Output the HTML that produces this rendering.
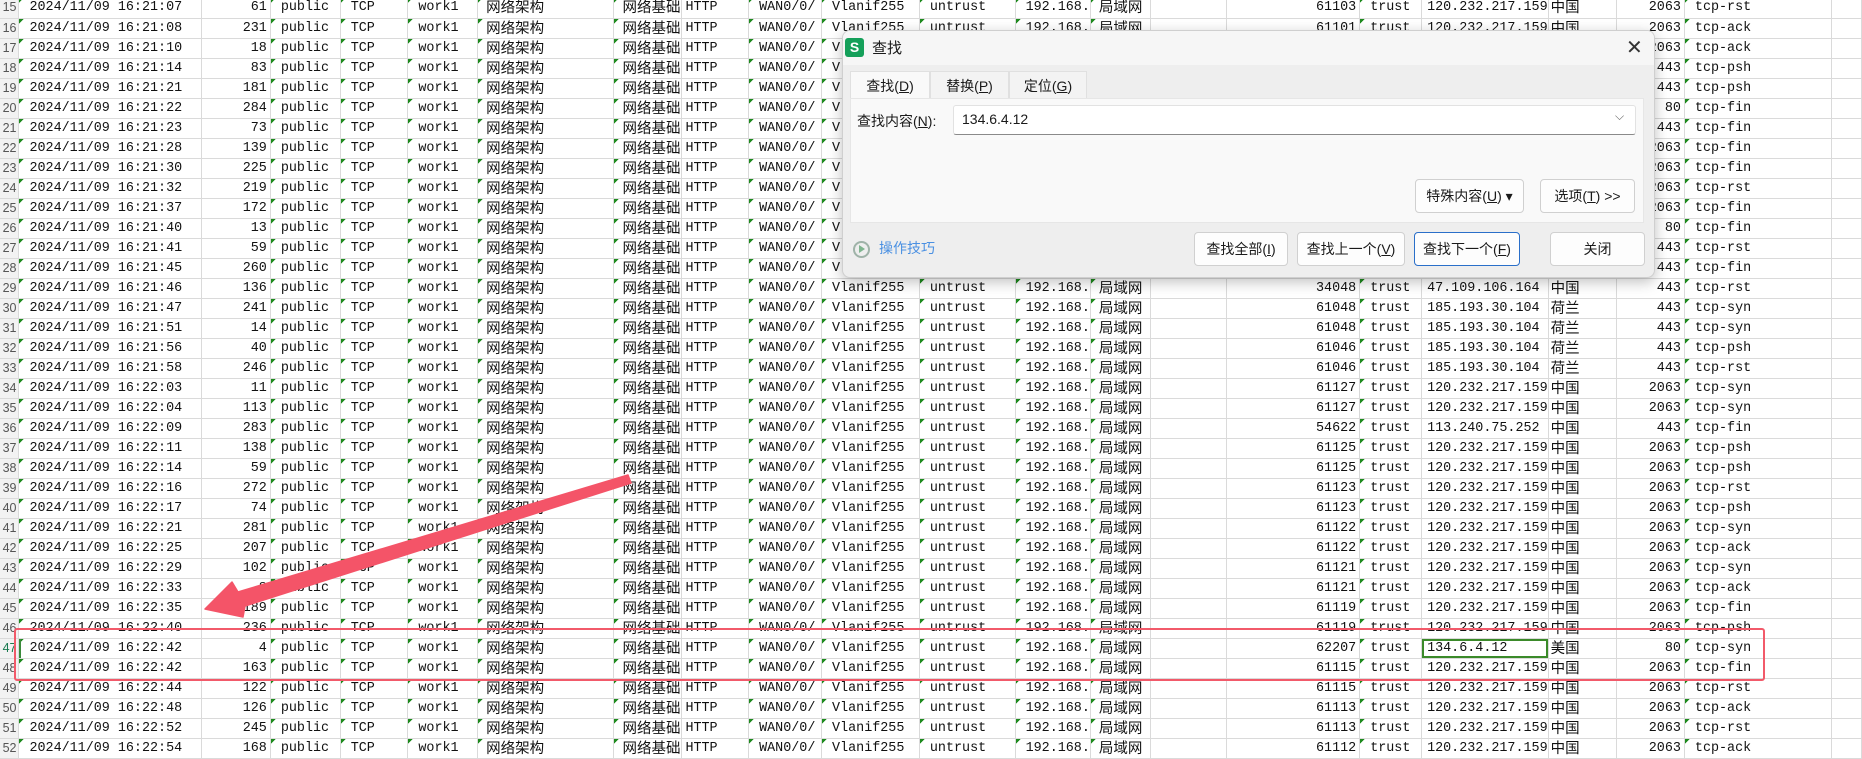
<!DOCTYPE html>
<html><head><meta charset="utf-8"><style>
body{margin:0;width:1862px;height:759px;overflow:hidden;background:#fff;position:relative;font-family:"Liberation Mono","Noto Sans CJK SC",monospace;}
table{border-collapse:collapse;table-layout:fixed;position:absolute;left:0;top:-2px;}
tr{height:20px;}
td{height:19px;border-right:1px solid #dadada;border-bottom:1px solid #dadada;padding:0 0 0 10px;font-size:13.4px;color:#111;white-space:nowrap;overflow:hidden;line-height:19px;}
td.r{text-align:right;padding:0 3px 0 0;}
td.n{background:#f2f2f2;color:#555;text-align:right;padding:0 2px 0 0;font-size:12.5px;font-family:"Liberation Sans",sans-serif;}
td.t{background-image:linear-gradient(135deg,#1e8a1e 3.5px,transparent 3.5px);background-repeat:no-repeat;}
td.c{font-family:"Noto Sans CJK SC",sans-serif;font-size:14.5px;line-height:15px;vertical-align:top;padding-top:1px;padding-left:8px;height:18px;}
td:nth-child(9){padding-left:3px;}
td:nth-child(18){padding-left:5px;}
td:nth-child(19){padding-left:2px;}
.dlg{position:absolute;left:842px;top:30px;width:811px;height:246px;background:#eeeeee;border:1px solid #cfcfcf;border-radius:8px;box-shadow:0 4px 14px rgba(0,0,0,.25);font-family:"Liberation Sans","Noto Sans CJK SC",sans-serif;font-size:14px;color:#1a1a1a;overflow:hidden;}
.dlg div{position:absolute;}
.btn{background:#fdfdfd;border:1px solid #d0d0d0;border-radius:4px;text-align:center;box-sizing:border-box;}
.tab{top:40px;height:28px;line-height:28px;text-align:center;border:1px solid #e0e0e0;border-bottom:none;background:#f3f3f3;box-sizing:border-box;}
</style></head><body>
<table>
<colgroup><col style="width:19px"><col style="width:183px"><col style="width:69px"><col style="width:70px"><col style="width:68px"><col style="width:70px"><col style="width:137px"><col style="width:68px"><col style="width:67px"><col style="width:73px"><col style="width:98px"><col style="width:96px"><col style="width:72px"><col style="width:60px"><col style="width:77px"><col style="width:134px"><col style="width:62px"><col style="width:124px"><col style="width:69px"><col style="width:68px"><col style="width:148px"><col style="width:30px"></colgroup>
<tr><td class="n">15</td><td class="t">2024/11/09 16:21:07</td><td class="r">61</td><td class="t">public</td><td class="t">TCP</td><td class="t">work1</td><td class="t c">网络架构</td><td class="t c">网络基础</td><td>HTTP</td><td class="t">WAN0/0/</td><td class="t">Vlanif255</td><td class="t">untrust</td><td class="t">192.168.</td><td class="t c">局域网</td><td></td><td class="r">61103</td><td class="t">trust</td><td>120.232.217.159</td><td class="c">中国</td><td class="r">2063</td><td class="t">tcp-rst</td><td></td></tr>
<tr><td class="n">16</td><td class="t">2024/11/09 16:21:08</td><td class="r">231</td><td class="t">public</td><td class="t">TCP</td><td class="t">work1</td><td class="t c">网络架构</td><td class="t c">网络基础</td><td>HTTP</td><td class="t">WAN0/0/</td><td class="t">Vlanif255</td><td class="t">untrust</td><td class="t">192.168.</td><td class="t c">局域网</td><td></td><td class="r">61101</td><td class="t">trust</td><td>120.232.217.159</td><td class="c">中国</td><td class="r">2063</td><td class="t">tcp-ack</td><td></td></tr>
<tr><td class="n">17</td><td class="t">2024/11/09 16:21:10</td><td class="r">18</td><td class="t">public</td><td class="t">TCP</td><td class="t">work1</td><td class="t c">网络架构</td><td class="t c">网络基础</td><td>HTTP</td><td class="t">WAN0/0/</td><td class="t">V</td><td></td><td></td><td></td><td></td><td></td><td></td><td></td><td></td><td class="r">2063</td><td class="t">tcp-ack</td><td></td></tr>
<tr><td class="n">18</td><td class="t">2024/11/09 16:21:14</td><td class="r">83</td><td class="t">public</td><td class="t">TCP</td><td class="t">work1</td><td class="t c">网络架构</td><td class="t c">网络基础</td><td>HTTP</td><td class="t">WAN0/0/</td><td class="t">V</td><td></td><td></td><td></td><td></td><td></td><td></td><td></td><td></td><td class="r">443</td><td class="t">tcp-psh</td><td></td></tr>
<tr><td class="n">19</td><td class="t">2024/11/09 16:21:21</td><td class="r">181</td><td class="t">public</td><td class="t">TCP</td><td class="t">work1</td><td class="t c">网络架构</td><td class="t c">网络基础</td><td>HTTP</td><td class="t">WAN0/0/</td><td class="t">V</td><td></td><td></td><td></td><td></td><td></td><td></td><td></td><td></td><td class="r">443</td><td class="t">tcp-psh</td><td></td></tr>
<tr><td class="n">20</td><td class="t">2024/11/09 16:21:22</td><td class="r">284</td><td class="t">public</td><td class="t">TCP</td><td class="t">work1</td><td class="t c">网络架构</td><td class="t c">网络基础</td><td>HTTP</td><td class="t">WAN0/0/</td><td class="t">V</td><td></td><td></td><td></td><td></td><td></td><td></td><td></td><td></td><td class="r">80</td><td class="t">tcp-fin</td><td></td></tr>
<tr><td class="n">21</td><td class="t">2024/11/09 16:21:23</td><td class="r">73</td><td class="t">public</td><td class="t">TCP</td><td class="t">work1</td><td class="t c">网络架构</td><td class="t c">网络基础</td><td>HTTP</td><td class="t">WAN0/0/</td><td class="t">V</td><td></td><td></td><td></td><td></td><td></td><td></td><td></td><td></td><td class="r">443</td><td class="t">tcp-fin</td><td></td></tr>
<tr><td class="n">22</td><td class="t">2024/11/09 16:21:28</td><td class="r">139</td><td class="t">public</td><td class="t">TCP</td><td class="t">work1</td><td class="t c">网络架构</td><td class="t c">网络基础</td><td>HTTP</td><td class="t">WAN0/0/</td><td class="t">V</td><td></td><td></td><td></td><td></td><td></td><td></td><td></td><td></td><td class="r">2063</td><td class="t">tcp-fin</td><td></td></tr>
<tr><td class="n">23</td><td class="t">2024/11/09 16:21:30</td><td class="r">225</td><td class="t">public</td><td class="t">TCP</td><td class="t">work1</td><td class="t c">网络架构</td><td class="t c">网络基础</td><td>HTTP</td><td class="t">WAN0/0/</td><td class="t">V</td><td></td><td></td><td></td><td></td><td></td><td></td><td></td><td></td><td class="r">2063</td><td class="t">tcp-fin</td><td></td></tr>
<tr><td class="n">24</td><td class="t">2024/11/09 16:21:32</td><td class="r">219</td><td class="t">public</td><td class="t">TCP</td><td class="t">work1</td><td class="t c">网络架构</td><td class="t c">网络基础</td><td>HTTP</td><td class="t">WAN0/0/</td><td class="t">V</td><td></td><td></td><td></td><td></td><td></td><td></td><td></td><td></td><td class="r">2063</td><td class="t">tcp-rst</td><td></td></tr>
<tr><td class="n">25</td><td class="t">2024/11/09 16:21:37</td><td class="r">172</td><td class="t">public</td><td class="t">TCP</td><td class="t">work1</td><td class="t c">网络架构</td><td class="t c">网络基础</td><td>HTTP</td><td class="t">WAN0/0/</td><td class="t">V</td><td></td><td></td><td></td><td></td><td></td><td></td><td></td><td></td><td class="r">2063</td><td class="t">tcp-fin</td><td></td></tr>
<tr><td class="n">26</td><td class="t">2024/11/09 16:21:40</td><td class="r">13</td><td class="t">public</td><td class="t">TCP</td><td class="t">work1</td><td class="t c">网络架构</td><td class="t c">网络基础</td><td>HTTP</td><td class="t">WAN0/0/</td><td class="t">V</td><td></td><td></td><td></td><td></td><td></td><td></td><td></td><td></td><td class="r">80</td><td class="t">tcp-fin</td><td></td></tr>
<tr><td class="n">27</td><td class="t">2024/11/09 16:21:41</td><td class="r">59</td><td class="t">public</td><td class="t">TCP</td><td class="t">work1</td><td class="t c">网络架构</td><td class="t c">网络基础</td><td>HTTP</td><td class="t">WAN0/0/</td><td class="t">V</td><td></td><td></td><td></td><td></td><td></td><td></td><td></td><td></td><td class="r">443</td><td class="t">tcp-rst</td><td></td></tr>
<tr><td class="n">28</td><td class="t">2024/11/09 16:21:45</td><td class="r">260</td><td class="t">public</td><td class="t">TCP</td><td class="t">work1</td><td class="t c">网络架构</td><td class="t c">网络基础</td><td>HTTP</td><td class="t">WAN0/0/</td><td class="t">V</td><td></td><td></td><td></td><td></td><td></td><td></td><td></td><td></td><td class="r">443</td><td class="t">tcp-fin</td><td></td></tr>
<tr><td class="n">29</td><td class="t">2024/11/09 16:21:46</td><td class="r">136</td><td class="t">public</td><td class="t">TCP</td><td class="t">work1</td><td class="t c">网络架构</td><td class="t c">网络基础</td><td>HTTP</td><td class="t">WAN0/0/</td><td class="t">Vlanif255</td><td class="t">untrust</td><td class="t">192.168.</td><td class="t c">局域网</td><td></td><td class="r">34048</td><td class="t">trust</td><td>47.109.106.164</td><td class="c">中国</td><td class="r">443</td><td class="t">tcp-rst</td><td></td></tr>
<tr><td class="n">30</td><td class="t">2024/11/09 16:21:47</td><td class="r">241</td><td class="t">public</td><td class="t">TCP</td><td class="t">work1</td><td class="t c">网络架构</td><td class="t c">网络基础</td><td>HTTP</td><td class="t">WAN0/0/</td><td class="t">Vlanif255</td><td class="t">untrust</td><td class="t">192.168.</td><td class="t c">局域网</td><td></td><td class="r">61048</td><td class="t">trust</td><td>185.193.30.104</td><td class="c">荷兰</td><td class="r">443</td><td class="t">tcp-syn</td><td></td></tr>
<tr><td class="n">31</td><td class="t">2024/11/09 16:21:51</td><td class="r">14</td><td class="t">public</td><td class="t">TCP</td><td class="t">work1</td><td class="t c">网络架构</td><td class="t c">网络基础</td><td>HTTP</td><td class="t">WAN0/0/</td><td class="t">Vlanif255</td><td class="t">untrust</td><td class="t">192.168.</td><td class="t c">局域网</td><td></td><td class="r">61048</td><td class="t">trust</td><td>185.193.30.104</td><td class="c">荷兰</td><td class="r">443</td><td class="t">tcp-syn</td><td></td></tr>
<tr><td class="n">32</td><td class="t">2024/11/09 16:21:56</td><td class="r">40</td><td class="t">public</td><td class="t">TCP</td><td class="t">work1</td><td class="t c">网络架构</td><td class="t c">网络基础</td><td>HTTP</td><td class="t">WAN0/0/</td><td class="t">Vlanif255</td><td class="t">untrust</td><td class="t">192.168.</td><td class="t c">局域网</td><td></td><td class="r">61046</td><td class="t">trust</td><td>185.193.30.104</td><td class="c">荷兰</td><td class="r">443</td><td class="t">tcp-psh</td><td></td></tr>
<tr><td class="n">33</td><td class="t">2024/11/09 16:21:58</td><td class="r">246</td><td class="t">public</td><td class="t">TCP</td><td class="t">work1</td><td class="t c">网络架构</td><td class="t c">网络基础</td><td>HTTP</td><td class="t">WAN0/0/</td><td class="t">Vlanif255</td><td class="t">untrust</td><td class="t">192.168.</td><td class="t c">局域网</td><td></td><td class="r">61046</td><td class="t">trust</td><td>185.193.30.104</td><td class="c">荷兰</td><td class="r">443</td><td class="t">tcp-rst</td><td></td></tr>
<tr><td class="n">34</td><td class="t">2024/11/09 16:22:03</td><td class="r">11</td><td class="t">public</td><td class="t">TCP</td><td class="t">work1</td><td class="t c">网络架构</td><td class="t c">网络基础</td><td>HTTP</td><td class="t">WAN0/0/</td><td class="t">Vlanif255</td><td class="t">untrust</td><td class="t">192.168.</td><td class="t c">局域网</td><td></td><td class="r">61127</td><td class="t">trust</td><td>120.232.217.159</td><td class="c">中国</td><td class="r">2063</td><td class="t">tcp-syn</td><td></td></tr>
<tr><td class="n">35</td><td class="t">2024/11/09 16:22:04</td><td class="r">113</td><td class="t">public</td><td class="t">TCP</td><td class="t">work1</td><td class="t c">网络架构</td><td class="t c">网络基础</td><td>HTTP</td><td class="t">WAN0/0/</td><td class="t">Vlanif255</td><td class="t">untrust</td><td class="t">192.168.</td><td class="t c">局域网</td><td></td><td class="r">61127</td><td class="t">trust</td><td>120.232.217.159</td><td class="c">中国</td><td class="r">2063</td><td class="t">tcp-syn</td><td></td></tr>
<tr><td class="n">36</td><td class="t">2024/11/09 16:22:09</td><td class="r">283</td><td class="t">public</td><td class="t">TCP</td><td class="t">work1</td><td class="t c">网络架构</td><td class="t c">网络基础</td><td>HTTP</td><td class="t">WAN0/0/</td><td class="t">Vlanif255</td><td class="t">untrust</td><td class="t">192.168.</td><td class="t c">局域网</td><td></td><td class="r">54622</td><td class="t">trust</td><td>113.240.75.252</td><td class="c">中国</td><td class="r">443</td><td class="t">tcp-fin</td><td></td></tr>
<tr><td class="n">37</td><td class="t">2024/11/09 16:22:11</td><td class="r">138</td><td class="t">public</td><td class="t">TCP</td><td class="t">work1</td><td class="t c">网络架构</td><td class="t c">网络基础</td><td>HTTP</td><td class="t">WAN0/0/</td><td class="t">Vlanif255</td><td class="t">untrust</td><td class="t">192.168.</td><td class="t c">局域网</td><td></td><td class="r">61125</td><td class="t">trust</td><td>120.232.217.159</td><td class="c">中国</td><td class="r">2063</td><td class="t">tcp-psh</td><td></td></tr>
<tr><td class="n">38</td><td class="t">2024/11/09 16:22:14</td><td class="r">59</td><td class="t">public</td><td class="t">TCP</td><td class="t">work1</td><td class="t c">网络架构</td><td class="t c">网络基础</td><td>HTTP</td><td class="t">WAN0/0/</td><td class="t">Vlanif255</td><td class="t">untrust</td><td class="t">192.168.</td><td class="t c">局域网</td><td></td><td class="r">61125</td><td class="t">trust</td><td>120.232.217.159</td><td class="c">中国</td><td class="r">2063</td><td class="t">tcp-psh</td><td></td></tr>
<tr><td class="n">39</td><td class="t">2024/11/09 16:22:16</td><td class="r">272</td><td class="t">public</td><td class="t">TCP</td><td class="t">work1</td><td class="t c">网络架构</td><td class="t c">网络基础</td><td>HTTP</td><td class="t">WAN0/0/</td><td class="t">Vlanif255</td><td class="t">untrust</td><td class="t">192.168.</td><td class="t c">局域网</td><td></td><td class="r">61123</td><td class="t">trust</td><td>120.232.217.159</td><td class="c">中国</td><td class="r">2063</td><td class="t">tcp-rst</td><td></td></tr>
<tr><td class="n">40</td><td class="t">2024/11/09 16:22:17</td><td class="r">74</td><td class="t">public</td><td class="t">TCP</td><td class="t">work1</td><td class="t c">网络架构</td><td class="t c">网络基础</td><td>HTTP</td><td class="t">WAN0/0/</td><td class="t">Vlanif255</td><td class="t">untrust</td><td class="t">192.168.</td><td class="t c">局域网</td><td></td><td class="r">61123</td><td class="t">trust</td><td>120.232.217.159</td><td class="c">中国</td><td class="r">2063</td><td class="t">tcp-psh</td><td></td></tr>
<tr><td class="n">41</td><td class="t">2024/11/09 16:22:21</td><td class="r">281</td><td class="t">public</td><td class="t">TCP</td><td class="t">work1</td><td class="t c">网络架构</td><td class="t c">网络基础</td><td>HTTP</td><td class="t">WAN0/0/</td><td class="t">Vlanif255</td><td class="t">untrust</td><td class="t">192.168.</td><td class="t c">局域网</td><td></td><td class="r">61122</td><td class="t">trust</td><td>120.232.217.159</td><td class="c">中国</td><td class="r">2063</td><td class="t">tcp-syn</td><td></td></tr>
<tr><td class="n">42</td><td class="t">2024/11/09 16:22:25</td><td class="r">207</td><td class="t">public</td><td class="t">TCP</td><td class="t">work1</td><td class="t c">网络架构</td><td class="t c">网络基础</td><td>HTTP</td><td class="t">WAN0/0/</td><td class="t">Vlanif255</td><td class="t">untrust</td><td class="t">192.168.</td><td class="t c">局域网</td><td></td><td class="r">61122</td><td class="t">trust</td><td>120.232.217.159</td><td class="c">中国</td><td class="r">2063</td><td class="t">tcp-ack</td><td></td></tr>
<tr><td class="n">43</td><td class="t">2024/11/09 16:22:29</td><td class="r">102</td><td class="t">public</td><td class="t">TCP</td><td class="t">work1</td><td class="t c">网络架构</td><td class="t c">网络基础</td><td>HTTP</td><td class="t">WAN0/0/</td><td class="t">Vlanif255</td><td class="t">untrust</td><td class="t">192.168.</td><td class="t c">局域网</td><td></td><td class="r">61121</td><td class="t">trust</td><td>120.232.217.159</td><td class="c">中国</td><td class="r">2063</td><td class="t">tcp-syn</td><td></td></tr>
<tr><td class="n">44</td><td class="t">2024/11/09 16:22:33</td><td class="r">8</td><td class="t">public</td><td class="t">TCP</td><td class="t">work1</td><td class="t c">网络架构</td><td class="t c">网络基础</td><td>HTTP</td><td class="t">WAN0/0/</td><td class="t">Vlanif255</td><td class="t">untrust</td><td class="t">192.168.</td><td class="t c">局域网</td><td></td><td class="r">61121</td><td class="t">trust</td><td>120.232.217.159</td><td class="c">中国</td><td class="r">2063</td><td class="t">tcp-ack</td><td></td></tr>
<tr><td class="n">45</td><td class="t">2024/11/09 16:22:35</td><td class="r">189</td><td class="t">public</td><td class="t">TCP</td><td class="t">work1</td><td class="t c">网络架构</td><td class="t c">网络基础</td><td>HTTP</td><td class="t">WAN0/0/</td><td class="t">Vlanif255</td><td class="t">untrust</td><td class="t">192.168.</td><td class="t c">局域网</td><td></td><td class="r">61119</td><td class="t">trust</td><td>120.232.217.159</td><td class="c">中国</td><td class="r">2063</td><td class="t">tcp-fin</td><td></td></tr>
<tr><td class="n">46</td><td class="t">2024/11/09 16:22:40</td><td class="r">236</td><td class="t">public</td><td class="t">TCP</td><td class="t">work1</td><td class="t c">网络架构</td><td class="t c">网络基础</td><td>HTTP</td><td class="t">WAN0/0/</td><td class="t">Vlanif255</td><td class="t">untrust</td><td class="t">192.168.</td><td class="t c">局域网</td><td></td><td class="r">61119</td><td class="t">trust</td><td>120.232.217.159</td><td class="c">中国</td><td class="r">2063</td><td class="t">tcp-psh</td><td></td></tr>
<tr><td class="n" style="color:#1a7a50">47</td><td class="t" style="box-shadow:inset 2px 0 #3b8a3b">2024/11/09 16:22:42</td><td class="r">4</td><td class="t">public</td><td class="t">TCP</td><td class="t">work1</td><td class="t c">网络架构</td><td class="t c">网络基础</td><td>HTTP</td><td class="t">WAN0/0/</td><td class="t">Vlanif255</td><td class="t">untrust</td><td class="t">192.168.</td><td class="t c">局域网</td><td></td><td class="r">62207</td><td class="t">trust</td><td style="box-shadow:inset 0 0 0 2px #3b8a2a;padding-left:5px">134.6.4.12</td><td class="c">美国</td><td class="r">80</td><td class="t">tcp-syn</td><td></td></tr>
<tr><td class="n">48</td><td class="t">2024/11/09 16:22:42</td><td class="r">163</td><td class="t">public</td><td class="t">TCP</td><td class="t">work1</td><td class="t c">网络架构</td><td class="t c">网络基础</td><td>HTTP</td><td class="t">WAN0/0/</td><td class="t">Vlanif255</td><td class="t">untrust</td><td class="t">192.168.</td><td class="t c">局域网</td><td></td><td class="r">61115</td><td class="t">trust</td><td>120.232.217.159</td><td class="c">中国</td><td class="r">2063</td><td class="t">tcp-fin</td><td></td></tr>
<tr><td class="n">49</td><td class="t">2024/11/09 16:22:44</td><td class="r">122</td><td class="t">public</td><td class="t">TCP</td><td class="t">work1</td><td class="t c">网络架构</td><td class="t c">网络基础</td><td>HTTP</td><td class="t">WAN0/0/</td><td class="t">Vlanif255</td><td class="t">untrust</td><td class="t">192.168.</td><td class="t c">局域网</td><td></td><td class="r">61115</td><td class="t">trust</td><td>120.232.217.159</td><td class="c">中国</td><td class="r">2063</td><td class="t">tcp-rst</td><td></td></tr>
<tr><td class="n">50</td><td class="t">2024/11/09 16:22:48</td><td class="r">126</td><td class="t">public</td><td class="t">TCP</td><td class="t">work1</td><td class="t c">网络架构</td><td class="t c">网络基础</td><td>HTTP</td><td class="t">WAN0/0/</td><td class="t">Vlanif255</td><td class="t">untrust</td><td class="t">192.168.</td><td class="t c">局域网</td><td></td><td class="r">61113</td><td class="t">trust</td><td>120.232.217.159</td><td class="c">中国</td><td class="r">2063</td><td class="t">tcp-ack</td><td></td></tr>
<tr><td class="n">51</td><td class="t">2024/11/09 16:22:52</td><td class="r">245</td><td class="t">public</td><td class="t">TCP</td><td class="t">work1</td><td class="t c">网络架构</td><td class="t c">网络基础</td><td>HTTP</td><td class="t">WAN0/0/</td><td class="t">Vlanif255</td><td class="t">untrust</td><td class="t">192.168.</td><td class="t c">局域网</td><td></td><td class="r">61113</td><td class="t">trust</td><td>120.232.217.159</td><td class="c">中国</td><td class="r">2063</td><td class="t">tcp-rst</td><td></td></tr>
<tr><td class="n">52</td><td class="t">2024/11/09 16:22:54</td><td class="r">168</td><td class="t">public</td><td class="t">TCP</td><td class="t">work1</td><td class="t c">网络架构</td><td class="t c">网络基础</td><td>HTTP</td><td class="t">WAN0/0/</td><td class="t">Vlanif255</td><td class="t">untrust</td><td class="t">192.168.</td><td class="t c">局域网</td><td></td><td class="r">61112</td><td class="t">trust</td><td>120.232.217.159</td><td class="c">中国</td><td class="r">2063</td><td class="t">tcp-ack</td><td></td></tr>
</table>

<div style="position:absolute;left:14px;top:628px;width:1747px;height:49px;border:2px solid #f25a6a;border-radius:3px;"></div>

<svg style="position:absolute;left:0;top:0" width="1862" height="759">
<polygon points="205,609 232,582 238,592 628,475 631,483 245,606 243,617" fill="#f45468" stroke="#f45468" stroke-width="1.5" stroke-linejoin="round"/>
</svg>

<div class="dlg">
 <div style="left:0;top:0;width:811px;height:34px;background:#f6f6f6;"></div>
 <div style="left:2px;top:7px;width:19px;height:19px;background:#15a05a;border-radius:3px;color:#fff;font-weight:bold;font-size:14px;line-height:19px;text-align:center;">S</div>
 <div style="left:29px;top:6px;font-size:15px;">查找</div>
 <div style="left:783px;top:4px;font-size:20px;color:#333;font-family:'DejaVu Sans',sans-serif;">✕</div>
 <div class="tab" style="left:7px;width:80px;background:#f9f9f9;">查找(<u>D</u>)</div>
 <div class="tab" style="left:87px;width:79px;">替换(<u>P</u>)</div>
 <div class="tab" style="left:166px;width:78px;">定位(<u>G</u>)</div>
 <div style="left:7px;top:67px;width:794px;height:125px;background:#f9f9f9;border:1px solid #e6e6e6;box-sizing:border-box;"></div>
 <div style="left:14px;top:80px;line-height:20px;">查找内容(<u>N</u>):</div>
 <div style="left:110px;top:74px;width:683px;height:30px;background:#fff;border:1px solid #e2e2e2;border-bottom:1px solid #8a8a8a;box-sizing:border-box;border-radius:3px;"></div>
 <div style="left:119px;top:80px;font-size:14px;">134.6.4.12</div>
 <div style="left:772px;top:78px;font-size:12px;color:#666;">⌵</div>
 <div class="btn" style="left:572px;top:148px;width:109px;height:34px;line-height:32px;">特殊内容(<u>U</u>) ▾</div>
 <div class="btn" style="left:697px;top:148px;width:95px;height:34px;line-height:32px;">选项(<u>T</u>) &gt;&gt;</div>
 <div style="left:10px;top:210px;width:17px;height:17px;border:2px solid #9fb3a8;border-radius:50%;box-sizing:border-box;"></div>
 <div style="left:16px;top:214px;width:0;height:0;border-left:6px solid #7fb58f;border-top:4px solid transparent;border-bottom:4px solid transparent;"></div>
 <div style="left:36px;top:207px;color:#4a90e2;">操作技巧</div>
 <div class="btn" style="left:351px;top:201px;width:94px;height:34px;line-height:32px;">查找全部(<u>I</u>)</div>
 <div class="btn" style="left:454px;top:201px;width:108px;height:34px;line-height:32px;">查找上一个(<u>V</u>)</div>
 <div class="btn" style="left:571px;top:201px;width:106px;height:34px;line-height:32px;border-color:#2a6fc9;">查找下一个(<u>F</u>)</div>
 <div class="btn" style="left:707px;top:201px;width:95px;height:34px;line-height:32px;">关闭</div>
</div>
</body></html>
